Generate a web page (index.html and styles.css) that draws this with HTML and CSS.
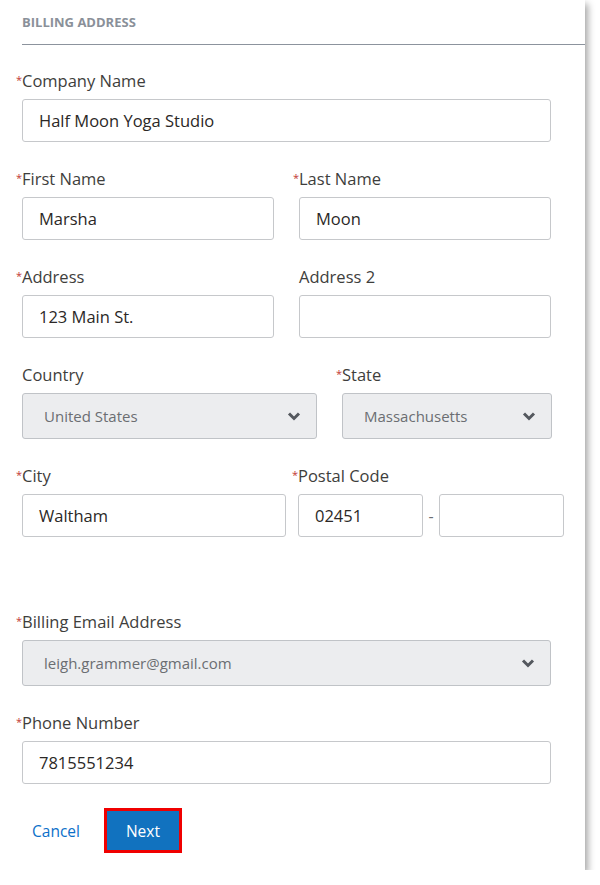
FILE: index.html
```html
<!DOCTYPE html>
<html lang="en">
<head>
    <meta charset="UTF-8">
    <meta name="viewport" content="width=device-width, initial-scale=1.0">
    <title>Billing Address</title>
    <link rel="stylesheet" href="styles.css">
</head>
<body>

<div class="card">
    <div class="section-title">BILLING ADDRESS</div>

    <div class="form">
        <div class="row">
            <div class="field full">
                <label><span class="req">*</span>Company Name</label>
                <div class="input">Half Moon Yoga Studio</div>
            </div>
        </div>

        <div class="row">
            <div class="field half">
                <label><span class="req">*</span>First Name</label>
                <div class="input">Marsha</div>
            </div>
            <div class="field half">
                <label><span class="req">*</span>Last Name</label>
                <div class="input">Moon</div>
            </div>
        </div>

        <div class="row">
            <div class="field half">
                <label><span class="req">*</span>Address</label>
                <div class="input">123 Main St.</div>
            </div>
            <div class="field half">
                <label>Address 2</label>
                <div class="input"></div>
            </div>
        </div>

        <div class="row">
            <div class="field country">
                <label>Country</label>
                <div class="select">United States
                    <svg class="chevron" width="14" height="10" viewBox="0 0 14 10"><path d="M2 2.5 L7 7.5 L12 2.5" fill="none" stroke="#54585e" stroke-width="3"/></svg>
                </div>
            </div>
            <div class="field state">
                <label><span class="req">*</span>State</label>
                <div class="select">Massachusetts
                    <svg class="chevron" width="14" height="10" viewBox="0 0 14 10"><path d="M2 2.5 L7 7.5 L12 2.5" fill="none" stroke="#54585e" stroke-width="3"/></svg>
                </div>
            </div>
        </div>

        <div class="row city-row">
            <div class="field city">
                <label><span class="req">*</span>City</label>
                <div class="input">Waltham</div>
            </div>
            <div class="field postal">
                <label><span class="req">*</span>Postal Code</label>
                <div class="postal-inputs">
                    <div class="input zip">02451</div>
                    <span class="dash">-</span>
                    <div class="input zip"></div>
                </div>
            </div>
        </div>

        <div class="row">
            <div class="field full">
                <label><span class="req">*</span>Billing Email Address</label>
                <div class="select">leigh.grammer@gmail.com
                    <svg class="chevron" width="14" height="10" viewBox="0 0 14 10"><path d="M2 2.5 L7 7.5 L12 2.5" fill="none" stroke="#54585e" stroke-width="3"/></svg>
                </div>
            </div>
        </div>

        <div class="row">
            <div class="field full">
                <label><span class="req">*</span>Phone Number</label>
                <div class="input">7815551234</div>
            </div>
        </div>

        <div class="actions">
            <a class="cancel" href="#">Cancel</a>
            <button class="next">Next</button>
        </div>
    </div>
</div>

</body>
</html>
```

FILE: styles.css
```css
body {
    margin: 0;
    background: #fff;
    font-family: "Open Sans", Lato, sans-serif;
    color: #3e3e3c;
}
.card {
    width: 585px;
    height: 870px;
    background: #fff;
    box-shadow: 3px 4px 7px rgba(0,0,0,0.35);
}
.section-title {
    margin-left: 22px;
    padding: 14px 0 14px;
    line-height: 16px;
    font-size: 13px;
    font-weight: bold;
    color: #8a9099;
    border-bottom: 1px solid #8c939d;
}
.form {
    padding: 26px 0 0 22px;
}
.row {
    display: flex;
    gap: 25px;
    margin-bottom: 27px;
}
.field label {
    display: block;
    font-size: 16.5px;
    line-height: 20px;
    margin-bottom: 8px;
    color: #3e3e3c;
}
.req {
    display: inline-block;
    width: 6px;
    margin-left: -6px;
    color: #c23934;
    font-size: 11px;
    vertical-align: 3px;
    line-height: 10px;
}
.full { width: 529px; }
.half { width: 252px; }
.country { width: 295px; }
.state { width: 210px; }
.city { width: 264px; }
.city-row { gap: 12px; margin-bottom: 75px; }
.input {
    box-sizing: border-box;
    height: 43px;
    border: 1px solid #c6c8cb;
    border-radius: 3px;
    padding-left: 16px;
    font-size: 16.5px;
    line-height: 41px;
    color: #2b2826;
}
.select {
    box-sizing: border-box;
    height: 46px;
    border: 1px solid #c0c3c7;
    border-radius: 3px;
    background: #ecedef;
    padding-left: 21px;
    font-size: 15px;
    line-height: 44px;
    color: #6b6e72;
    display: flex;
    justify-content: space-between;
    align-items: center;
}
.chevron {
    margin-right: 15px;
}
.postal-inputs {
    display: flex;
    align-items: center;
}
.zip {
    width: 125px;
}
.dash {
    width: 16px;
    text-align: center;
    color: #6b6e72;
}
.actions {
    display: flex;
    align-items: center;
    margin-top: -3px;
}
.cancel {
    color: #0b70c9;
    text-decoration: none;
    font-size: 15.5px;
    margin-left: 10px;
    margin-right: 24px;
}
.next {
    width: 78px;
    height: 45px;
    background: #1172bf;
    color: #fff;
    border: 3px solid #f00000;
    font-family: "Open Sans", Lato, sans-serif;
    font-size: 15.5px;
    padding: 0;
}
```
